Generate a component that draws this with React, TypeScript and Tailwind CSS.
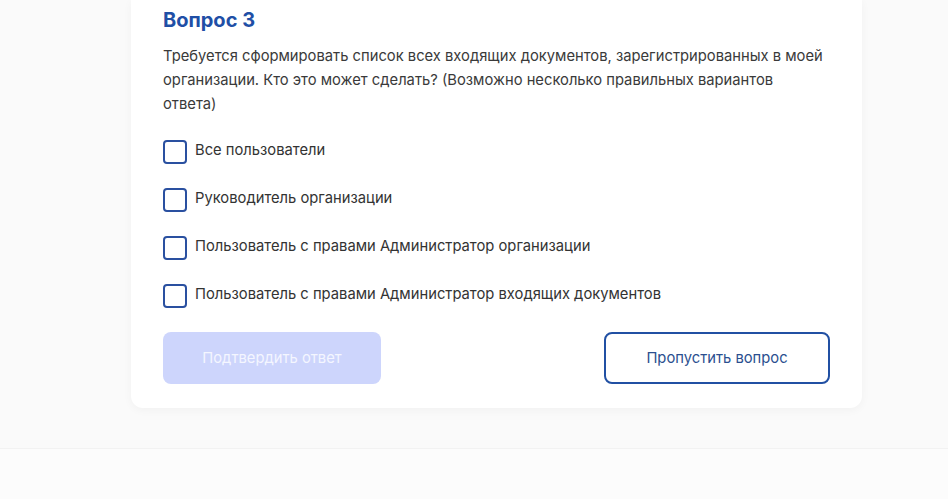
import React from "react";

const options = [
  "Все пользователи",
  "Руководитель организации",
  "Пользователь с правами Администратор организации",
  "Пользователь с правами Администратор входящих документов",
];

export default function App() {
  return (
    <div
      className="w-[948px] h-[499px] bg-[#fafafa] flex flex-col overflow-hidden"
      style={{ fontFamily: "Inter, 'Noto Sans', sans-serif" }}
    >
      <div className="h-[448px] flex flex-col items-start pl-[131px]">
        <div className="w-[731px] bg-white rounded-b-[12px] shadow-[0_2px_10px_rgba(0,0,0,0.04)] px-[32px] pt-[6px] pb-[24px]">
          <h2 className="text-[20px] leading-[28px] font-bold text-[#1f4fa6]">Вопрос 3</h2>
          <p className="mt-[10px] text-[14.75px] leading-[24px] text-[#3a3a3a]">
            Требуется сформировать список всех входящих документов, зарегистрированных в моей
            организации. Кто это может сделать? (Возможно несколько правильных вариантов ответа)
          </p>
          <div className="mt-[24px] flex flex-col gap-[24px]">
            {options.map((o) => (
              <label key={o} className="flex items-center gap-[8px] h-[24px]">
                <span className="w-[24px] h-[24px] rounded-[4px] border-2 border-[#2a50a0] bg-white shrink-0" />
                <span className="text-[14.75px] leading-[24px] text-[#333] -mt-[4px]">{o}</span>
              </label>
            ))}
          </div>
          <div className="mt-[24px] flex justify-between">
            <button className="w-[218px] h-[52px] rounded-[8px] bg-[#cdd5fc] text-[#f4f6ff] text-[14.75px]">
              Подтвердить ответ
            </button>
            <button className="w-[226px] h-[52px] rounded-[8px] border-2 border-[#2150a3] bg-white text-[#2b4f8f] text-[14.75px]">
              Пропустить вопрос
            </button>
          </div>
        </div>
      </div>
      <div className="flex-1 border-t border-[#f2f2f2] bg-[#fcfcfc]" />
    </div>
  );
}
